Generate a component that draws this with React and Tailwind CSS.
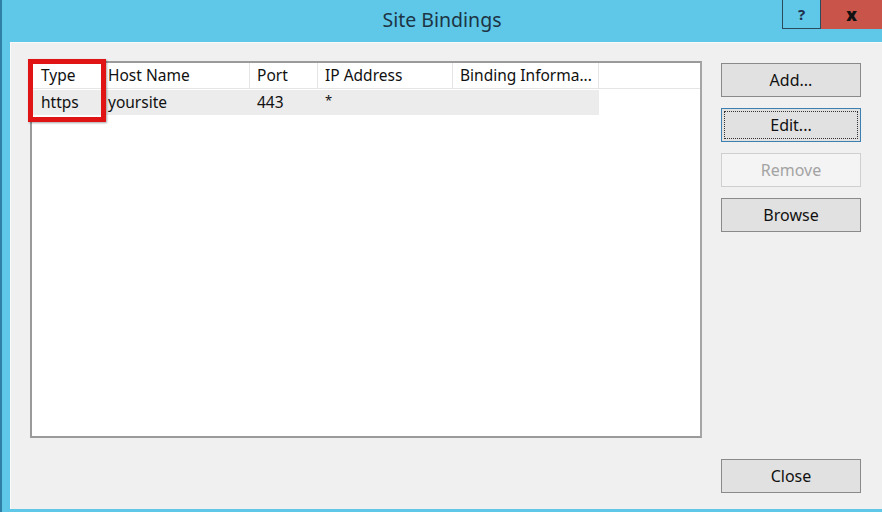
import React from "react";

const cols = [
  { label: "Type", w: 72, pl: 9 },
  { label: "Host Name", w: 146, pl: 4 },
  { label: "Port", w: 68, pl: 7 },
  { label: "IP Address", w: 135, pl: 7 },
  { label: "Binding Informa...", w: 146, pl: 7 },
];
const row = ["https", "yoursite", "443", "*", ""];

function Btn({ children, variant }) {
  if (variant === "focus")
    return (
      <div className="h-[34px] w-[140px] border border-[#3c7fb1] bg-[#e1e1e1] p-[2px]">
        <div className="h-full w-full border border-dotted border-[#333] flex items-center justify-center text-[16px] text-[#111]">
          {children}
        </div>
      </div>
    );
  if (variant === "disabled")
    return (
      <div className="h-[34px] w-[140px] border border-[#cfcfcf] bg-[#f4f4f4] flex items-center justify-center text-[16px] text-[#a3a3a3]">
        {children}
      </div>
    );
  return (
    <div className="h-[34px] w-[140px] border border-[#8a8a8a] bg-[#e1e1e1] flex items-center justify-center text-[16px] text-[#111]">
      {children}
    </div>
  );
}

export default function App() {
  return (
    <div
      className="w-[882px] h-[512px] bg-[#5fc8e8] flex flex-col overflow-hidden"
      style={{ fontFamily: '"Noto Sans", "Open Sans", sans-serif' }}
    >
      <div className="h-[42px] shrink-0 grid grid-cols-[1fr_auto_1fr] border-l-[2px] border-[#2f7fa6]">
        <div />
        <div className="pt-[5px] text-[19.5px] text-[#1d3444]">Site Bindings</div>
        <div className="flex justify-end items-start">
          <div className="w-[39px] h-[29px] border-x border-b border-[#2b4a5c] flex items-center justify-center text-[15px] font-bold text-[#1f2f4f]">
            ?
          </div>
          <div className="w-[61px] h-[29px] bg-[#c9544a] flex items-center justify-center text-[17px] font-black text-[#111]">
            x
          </div>
        </div>
      </div>
      <div className="flex-1 min-h-0 flex border-l-[2px] border-[#2f7fa6] pb-[3px]">
        <div className="w-[8px] shrink-0" />
        <div className="flex-1 bg-[#f0f0f0] border-t border-l border-[#fafafa] flex items-start pt-[18px] pl-[19px]">
          <div className="relative w-[672px] h-[377px] shrink-0 border-[2px] border-[#9a9a9a] border-r-[#a6a6a6] bg-white">
            <div className="flex h-[26px] border-b border-[#e5e5e5]">
              {cols.map((c) => (
                <div
                  key={c.label}
                  className="h-full border-r border-[#e5e5e5] flex items-center text-[15.5px] text-[#111] whitespace-nowrap"
                  style={{ width: c.w, paddingLeft: c.pl }}
                >
                  {c.label}
                </div>
              ))}
            </div>
            <div className="flex h-[25px] mt-[1px] bg-[#ececec] w-[567px]">
              {row.map((v, i) => (
                <div
                  key={i}
                  className={
                    v === "*"
                      ? "h-full flex items-start pt-[1px] text-[13px] text-[#111]"
                      : "h-full flex items-center text-[15.5px] text-[#111]"
                  }
                  style={{ width: cols[i].w, paddingLeft: cols[i].pl }}
                >
                  {v}
                </div>
              ))}
            </div>
            <div className="absolute left-[-4px] top-[-4px] w-[78px] h-[63px] border-[5px] border-[#e01414] shadow-[1px_1px_2px_rgba(0,0,0,0.35)]" />
          </div>
          <div className="ml-[19px] flex flex-col pt-[2px] h-[432px]">
            <div className="flex flex-col gap-[11px]">
              <Btn>Add...</Btn>
              <Btn variant="focus">Edit...</Btn>
              <Btn variant="disabled">Remove</Btn>
              <Btn>Browse</Btn>
            </div>
            <div className="mt-auto">
              <Btn>Close</Btn>
            </div>
          </div>
        </div>
      </div>
    </div>
  );
}
